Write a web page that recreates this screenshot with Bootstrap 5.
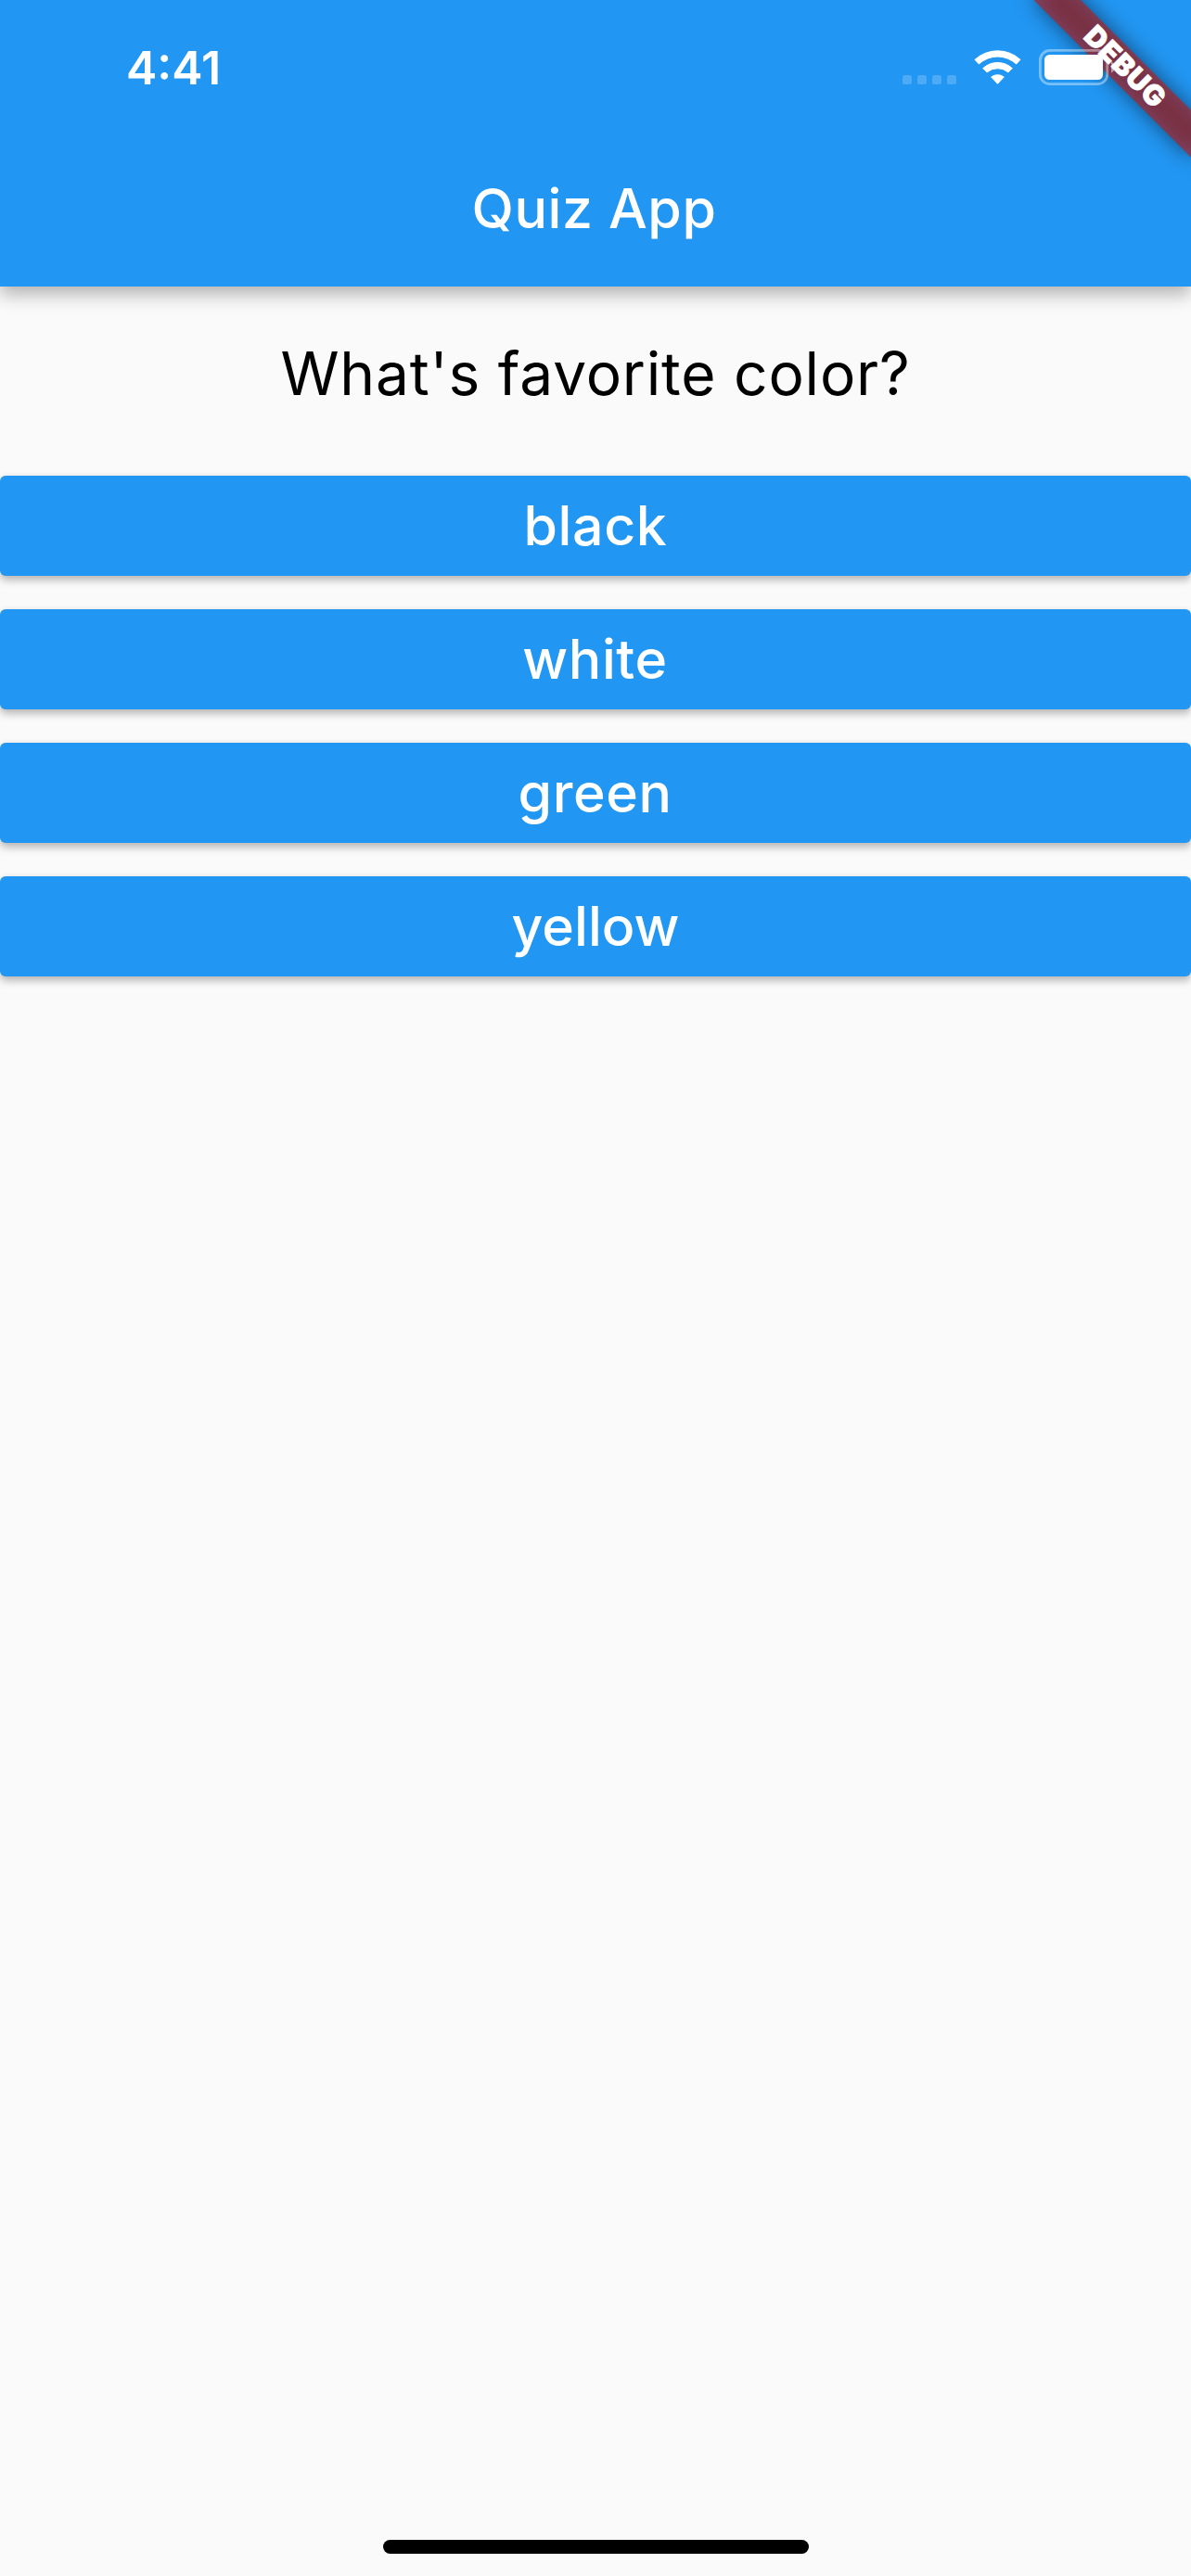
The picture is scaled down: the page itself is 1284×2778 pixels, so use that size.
<!DOCTYPE html>
<html lang="en">
<head>
<meta charset="utf-8">
<meta name="viewport" content="width=device-width, initial-scale=1">
<title>Quiz App</title>
<link href="https://cdn.jsdelivr.net/npm/bootstrap@5.3.0/dist/css/bootstrap.min.css" rel="stylesheet">
<style>
body{font-family:Inter,"Liberation Sans",sans-serif;background:#fafafa;color:#000}
.screen{width:1284px;height:2778px}
.app-header{height:309px;background:#2196f3;box-shadow:0 10px 17px rgba(0,0,0,.25),0 0 12px rgba(0,0,0,.04)}
.status-row{height:141px;padding-left:136px}
.clock{font-size:50px;font-weight:600;line-height:60px;padding-top:43px}
.status-icons{width:344px;height:141px;overflow:visible}
.toolbar-row{height:168px;padding-right:3px}
.app-title{font-size:59px;font-weight:540;line-height:70px;letter-spacing:.6px}
.question{font-size:64px;line-height:78px;padding-top:55px;margin-bottom:71px;letter-spacing:.8px}
.answers{gap:36px}
.answer{height:108px;padding:0 1px 0 0;border:0;border-radius:6px;font-size:59px;font-weight:540;line-height:108px;letter-spacing:.6px;--bs-btn-bg:#2196f3;--bs-btn-color:#fff;--bs-btn-hover-bg:#1e88e5;--bs-btn-hover-color:#fff;box-shadow:0 5px 9px rgba(0,0,0,.25),0 0 6px rgba(0,0,0,.05)}
.answer:first-child{padding-right:0}
.answer:last-child{padding-right:0;letter-spacing:.05px}
.home-bar{width:459px;height:15px;background:#000;margin-bottom:24px}
.ribbon-label{font-size:30.5px;font-weight:900;letter-spacing:.8px}
</style>
</head>
<body>
<div class="screen d-flex flex-column overflow-hidden">
  <header class="app-header text-white flex-shrink-0">
    <div class="status-row d-flex justify-content-between">
      <div class="clock">4:41</div>
      <svg class="status-icons" viewBox="0 0 344 141" aria-hidden="true">
        <defs>
          <filter id="soft" x="-40%" y="-200%" width="180%" height="500%"><feGaussianBlur stdDeviation="11.9"/></filter>
        </defs>
        <!-- corner ribbon -->
        <g transform="translate(344 0) rotate(45)">
          <rect x="-120" y="84" width="240" height="36" fill="#000" fill-opacity=".5" filter="url(#soft)"/>
          <rect x="-130" y="84" width="260" height="36" fill="#b71c1c" fill-opacity=".627"/>
          <text class="ribbon-label" x="1" y="111.8" text-anchor="middle" fill="#fff" stroke="#fff" stroke-width=".7">DEBUG</text>
        </g>
        <!-- signal dots -->
        <g fill="#fff" fill-opacity=".2">
          <rect x="33" y="81" width="10" height="10" rx="2.6"/>
          <rect x="49" y="81" width="10" height="10" rx="2.6"/>
          <rect x="65" y="81" width="10" height="10" rx="2.6"/>
          <rect x="81" y="81" width="10" height="10" rx="2.6"/>
        </g>
        <!-- wifi -->
        <g transform="scale(.33333)" fill="#fff" stroke="#fff" stroke-width="3" stroke-linejoin="round">
          <path d="M333 193A109 109 0 0 1 480 193L467 207A89 89 0 0 0 346 207Z"/>
          <path d="M359 221A70 70 0 0 1 454 221L441 234A53 53 0 0 0 372 234Z"/>
          <path d="M386 249A34 34 0 0 1 427 249L406.500 271Z"/>
        </g>
        <!-- battery -->
        <rect x="181.400" y="54.400" width="72.300" height="36.300" rx="10.500" fill="none" stroke="#fff" stroke-opacity=".4" stroke-width="2.800"/>
        <rect x="186" y="59" width="63" height="27" rx="5.500" fill="#fff"/>
        <path d="M258 66.500C260.500 67.600 262 69.800 262 72.500S260.500 77.400 258 78.500Z" fill="#fff" fill-opacity=".5"/>
      </svg>
    </div>
    <div class="toolbar-row d-flex align-items-center justify-content-center">
      <div class="app-title">Quiz App</div>
    </div>
  </header>
  <main class="flex-grow-1">
    <div class="question text-center">What's favorite color?</div>
    <div class="answers d-grid">
      <button type="button" class="btn answer">black</button>
      <button type="button" class="btn answer">white</button>
      <button type="button" class="btn answer">green</button>
      <button type="button" class="btn answer">yellow</button>
    </div>
  </main>
  <div class="home-bar rounded-pill align-self-center flex-shrink-0"></div>
</div>
<script src="https://cdn.jsdelivr.net/npm/bootstrap@5.3.0/dist/js/bootstrap.bundle.min.js"></script>
</body>
</html>
